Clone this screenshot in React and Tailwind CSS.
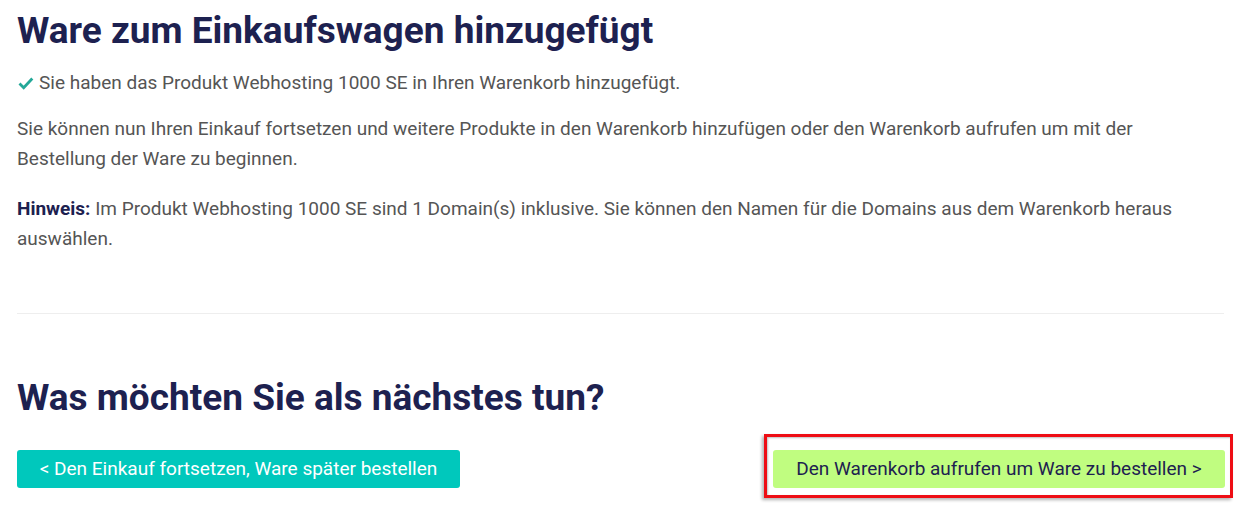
export default function App() {
  const font = { fontFamily: 'Roboto, "Open Sans", sans-serif' };
  return (
    <div className="w-[1237px] h-[507px] bg-white overflow-hidden pl-[17px] pr-[13px] pt-[7px]" style={font}>
      <h1 className="text-[37px] leading-[48px] font-bold text-[#1d2150]">Ware zum Einkaufswagen hinzugefügt</h1>
      <p className="mt-[13px] flex items-center text-[19px] leading-[30px] text-[#555]">
        <svg className="w-[16px] h-[16px] mr-[5px] ml-[1px]" viewBox="0 0 16 16"><path d="M1.5 8.5l4.2 4.2 8.6-9.2" fill="none" stroke="#23a898" strokeWidth="2.8" /></svg>
        Sie haben das Produkt Webhosting 1000 SE in Ihren Warenkorb hinzugefügt.
      </p>
      <p className="mt-[16px] text-[19px] leading-[30px] text-[#555]">
        Sie können nun Ihren Einkauf fortsetzen und weitere Produkte in den Warenkorb hinzufügen oder den Warenkorb aufrufen um mit der<br />Bestellung der Ware zu beginnen.
      </p>
      <p className="mt-[20px] text-[19px] leading-[30px] text-[#555]">
        <b className="text-[#1d2150]">Hinweis:</b> Im Produkt Webhosting 1000 SE sind 1 Domain(s) inklusive. Sie können den Namen für die Domains aus dem Warenkorb heraus<br />auswählen.
      </p>
      <div className="mt-[59px] border-t border-[#eeeeee]" />
      <h2 className="mt-[60px] text-[37px] leading-[48px] font-bold text-[#1d2150]">Was möchten Sie als nächstes tun?</h2>
      <div className="mt-[12px] flex justify-between items-start">
        <button className="mt-[16px] w-[443px] h-[38px] rounded-[3px] bg-[#00c8bc] text-white text-[19px]">&lt; Den Einkauf fortsetzen, Ware später bestellen</button>
        <div className="mr-[-9px] border-[3px] border-[#ee0d14] pl-[6px] pr-[5px] pt-[13px] pb-[7px] shadow-[-2px_2px_3px_rgba(0,0,0,0.3),inset_1px_1px_2px_rgba(0,0,0,0.25)]">
          <button className="w-[452px] h-[38px] rounded-[3px] bg-[#c0fd80] text-[#1d2150] text-[19px]">Den Warenkorb aufrufen um Ware zu bestellen &gt;</button>
        </div>
      </div>
    </div>
  );
}
